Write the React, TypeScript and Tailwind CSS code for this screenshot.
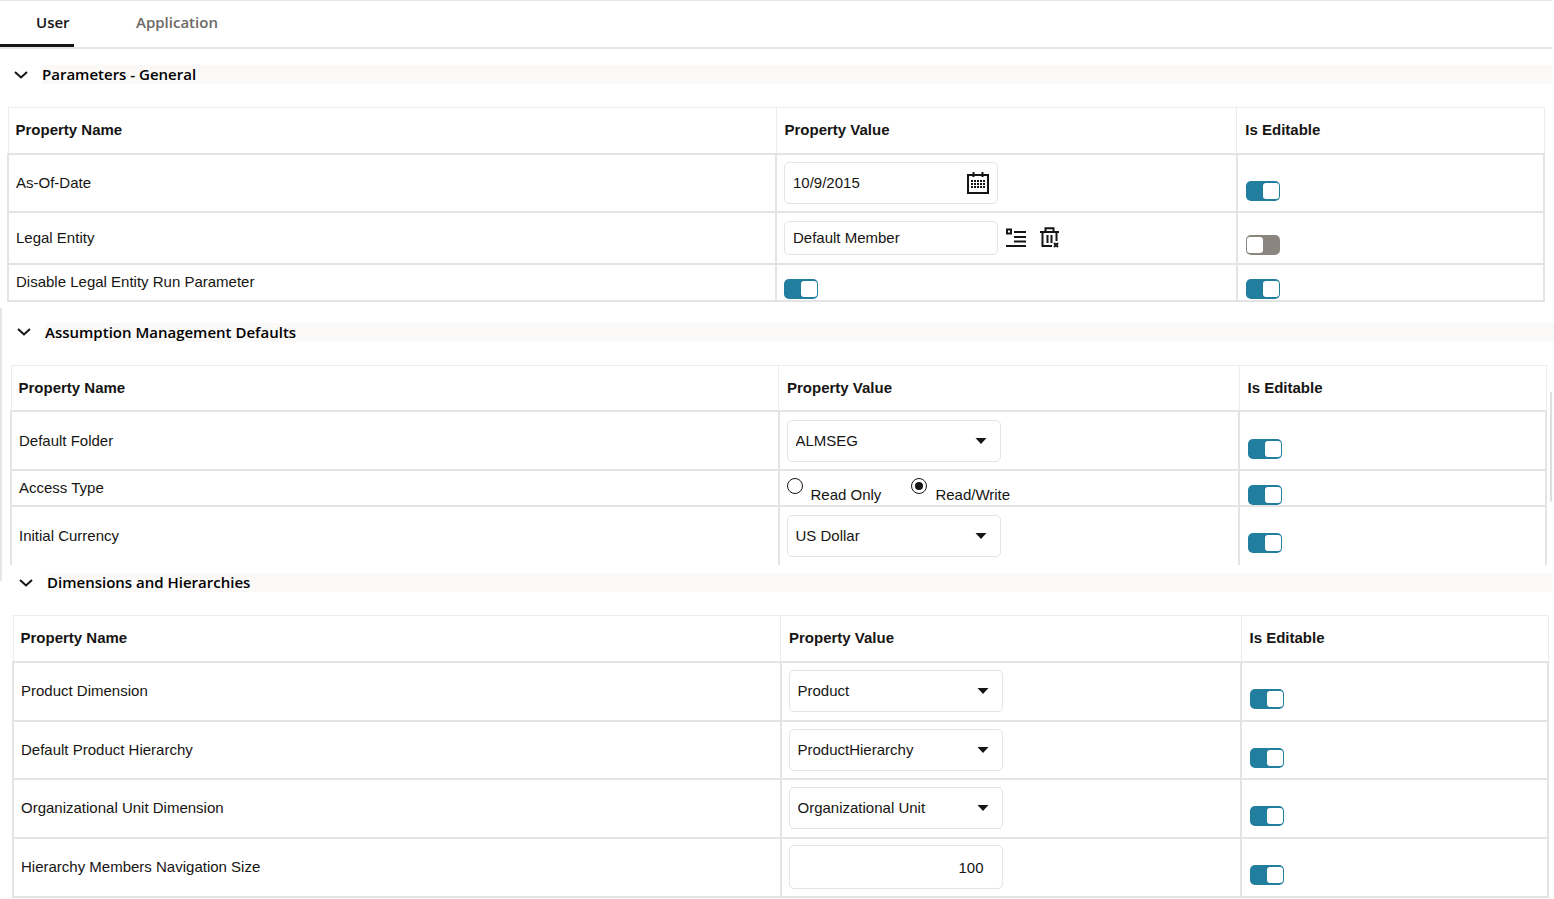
import React from "react";

const ARIAL = "font-['Liberation_Sans',Arial,sans-serif]";
const FIELD = "w-[214px] rounded-[5px] border border-[#e4e4e4] bg-white text-[15px] text-[#161513] outline-none focus:border-[#227e9e]";

function Switch({ label, on = true }: { label: string; on?: boolean }) {
  return (
    <input
      type="checkbox"
      role="switch"
      aria-label={label}
      defaultChecked={on}
      className="flex h-5 w-[34px] cursor-pointer appearance-none items-center justify-start rounded-[5px] bg-[#8b8580] px-px before:block before:size-4 before:rounded-[3px] before:bg-white checked:justify-end checked:bg-[#227e9e]"
    />
  );
}

function Select({ label, options }: { label: string; options: string[] }) {
  return (
    <div className="relative w-[214px]">
      <select aria-label={label} className={`${FIELD} block h-[42px] appearance-none pr-8 pl-2`}>
        {options.map((o) => (
          <option key={o}>{o}</option>
        ))}
      </select>
      <svg viewBox="0 0 12 6" className="pointer-events-none absolute top-[18px] right-3.5 h-1.5 w-3" aria-hidden="true">
        <path d="M0.5 0h11L6 6z" fill="#161513" />
      </svg>
    </div>
  );
}

function CalendarIcon() {
  return (
    <svg viewBox="0 0 22 22" className="size-[22px]" fill="none" stroke="#161513" aria-hidden="true">
      <path d="M1 3h20v18H1z" strokeWidth="2" />
      <path d="M6.5 0v5M15.500 0v5" strokeWidth="2" />
      <path d="M4 9h14M4 12h14M4 15h14" strokeWidth="2" strokeDasharray="2 1" />
    </svg>
  );
}

function HierarchyIcon() {
  return (
    <svg viewBox="0 0 20 19" className="h-[19px] w-5" fill="none" stroke="#161513" strokeWidth="2" aria-hidden="true">
      <path d="M1 1.500h4v4H1z" />
      <path d="M8 4h12M8 9h12M8 13.500h12M0 18h20" />
    </svg>
  );
}

function TrashIcon() {
  return (
    <svg viewBox="0 0 20 21" className="h-[21px] w-5" fill="none" stroke="#161513" strokeWidth="2" aria-hidden="true">
      <path d="M0 5h19M5.500 5V1.200h8V5M2.500 5v14H12M16.500 5v9M7.500 8v8M11.500 8v8" />
      <path d="M14 16l4 4M18 16l-4 4" />
    </svg>
  );
}

type Row = { name: string; height: string; value: React.ReactNode; on?: boolean; compact?: boolean };

type SectionProps = { title: string; rows: Row[]; className: string; tableInset: string; open?: boolean };

function Section({ title, rows, className, tableInset, open = false }: SectionProps) {
  return (
    <section className={className}>
      <h2 className="flex items-center">
        <button type="button" aria-label={`Collapse ${title}`} className="flex w-[35px] shrink-0 pl-[7px]">
          <svg viewBox="0 0 14 8" className="h-2 w-3.5" fill="none" stroke="#161513" strokeWidth="2" aria-hidden="true">
            <path d="M1 1l6 5.500L13 1" />
          </svg>
        </button>
        <span className="h-[19px] flex-1 bg-[#faf9f8] text-[15px] leading-[19px] font-semibold text-black">{title}</span>
      </h2>
      <div className={`pt-[23px] ${tableInset}`}>
        <table className={`w-full table-fixed border-collapse text-[15px] leading-5 text-[#161513] ${ARIAL}`}>
          <thead>
            <tr className="h-[46px]">
              {["Property Name", "Property Value", "Is Editable"].map((h, i) => (
                <th
                  key={h}
                  scope="col"
                  className={`border border-[#ececec] p-0 text-left font-bold ${i === 0 ? "w-1/2 pl-[7px]" : i === 1 ? "w-3/10 pl-2" : "w-1/5 pl-2"}`}
                >
                  {h}
                </th>
              ))}
            </tr>
          </thead>
          <tbody className={open ? "[&>tr:last-child>*]:border-b-0" : ""}>
            {rows.map((r) => (
              <tr key={r.name} className={r.height}>
                <th scope="row" className="border-2 border-[#e4e4e4] p-0 pl-[7px] text-left font-normal">{r.name}</th>
                <td className="border-2 border-[#e4e4e4] p-0 pl-[7px]">{r.value}</td>
                <td className={`border-2 border-[#e4e4e4] p-0 pl-2 ${r.compact ? "pt-3.5" : "pt-4"}`}>
                  <Switch label={`${r.name} is editable`} on={r.on} />
                </td>
              </tr>
            ))}
          </tbody>
        </table>
      </div>
    </section>
  );
}

function Radio({ label, checked = false }: { label: string; checked?: boolean }) {
  return (
    <label className="flex items-start gap-2">
      <input
        type="radio"
        name="access"
        defaultChecked={checked}
        className="flex size-4 appearance-none items-center justify-center rounded-full border border-[#161513] checked:before:block checked:before:size-2 checked:before:rounded-full checked:before:bg-[#161513]"
      />
      <span className="pt-[7px]">{label}</span>
    </label>
  );
}

const general: Row[] = [
  {
    name: "As-Of-Date",
    height: "h-[58px]",
    value: (
      <div className="relative w-[214px]">
        <input type="text" aria-label="As-Of-Date" defaultValue="10/9/2015" className={`${FIELD} block h-[42px] pr-10 pl-2`} />
        <button type="button" aria-label="Pick a date" className="absolute top-2.5 right-[9px]">
          <CalendarIcon />
        </button>
      </div>
    ),
  },
  {
    name: "Legal Entity",
    height: "h-[52px]",
    on: false,
    compact: true,
    value: (
      <div className="flex items-center">
        <input type="text" aria-label="Legal Entity" defaultValue="Default Member" className={`${FIELD} h-[34px] px-2`} />
        <button type="button" aria-label="Browse hierarchy" className="ml-2">
          <HierarchyIcon />
        </button>
        <button type="button" aria-label="Clear legal entity" className="ml-3.5">
          <TrashIcon />
        </button>
      </div>
    ),
  },
  {
    name: "Disable Legal Entity Run Parameter",
    height: "h-[37px]",
    compact: true,
    value: (
      <div className="pt-3.5">
        <Switch label="Disable Legal Entity Run Parameter" />
      </div>
    ),
  },
];

const assumptions: Row[] = [
  { name: "Default Folder", height: "h-[59px]", value: <Select label="Default Folder" options={["ALMSEG"]} /> },
  {
    name: "Access Type",
    height: "h-[36px]",
    compact: true,
    value: (
      <div className="flex gap-[30px] pt-1.5">
        <Radio label="Read Only" />
        <Radio label="Read/Write" checked />
      </div>
    ),
  },
  { name: "Initial Currency", height: "h-[59px]", compact: true, value: <Select label="Initial Currency" options={["US Dollar"]} /> },
];

const dimensions: Row[] = [
  { name: "Product Dimension", height: "h-[59px]", value: <Select label="Product Dimension" options={["Product"]} /> },
  { name: "Default Product Hierarchy", height: "h-[58px]", value: <Select label="Default Product Hierarchy" options={["ProductHierarchy"]} /> },
  { name: "Organizational Unit Dimension", height: "h-[59px]", value: <Select label="Organizational Unit Dimension" options={["Organizational Unit"]} /> },
  {
    name: "Hierarchy Members Navigation Size",
    height: "h-[59px]",
    value: (
      <input
        type="text"
        inputMode="numeric"
        aria-label="Hierarchy Members Navigation Size"
        defaultValue="100"
        className={`${FIELD} block h-11 pr-[18px] text-right`}
      />
    ),
  },
];

export default function App() {
  return (
    <main className="relative bg-white font-['Open_Sans','Noto_Sans',sans-serif]">
      <nav className="mr-0.5 flex h-[49px] items-stretch border-t border-b-2 border-[#e6e6e6] text-[15px] font-semibold">
        <a href="#user" aria-current="page" className="flex w-[74px] items-center border-b-[3px] border-[#161513] pl-9 text-[#161513]">
          User
        </a>
        <a href="#application" className="ml-[62px] flex items-center border-b-[3px] border-transparent text-[#6b6966]">
          Application
        </a>
      </nav>
      <Section title="Parameters - General" rows={general} tableInset="pr-[7px]" className="pt-4 pr-0.5 pl-[7px]" />
      <Section
        title="Assumption Management Defaults"
        rows={assumptions}
        tableInset="pr-[7px]"
        open
        className="mt-1.5 border-l-2 border-[#e6e6e6] pt-[15px] pb-4 pl-2"
      />
      <Section title="Dimensions and Hierarchies" rows={dimensions} tableInset="pr-[3px]" className="-mt-2 pr-0.5 pl-3" />
      <div className="absolute top-[392px] right-0.5 h-[110px] w-0.5 rounded-full bg-[#dedede]" aria-hidden="true" />
    </main>
  );
}
